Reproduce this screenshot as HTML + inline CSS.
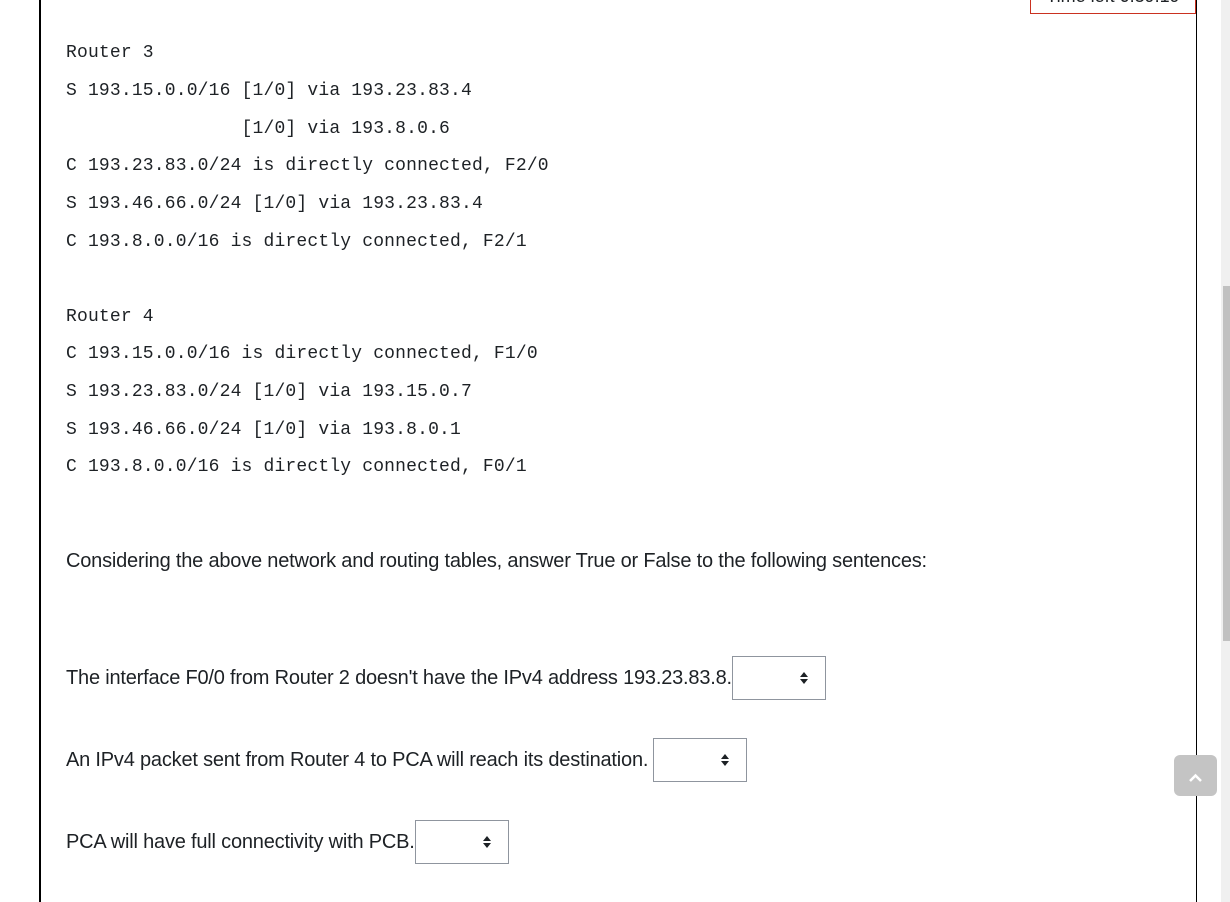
<!DOCTYPE html>
<html><head><style>
html,body{margin:0;padding:0;}
body{width:1230px;height:902px;position:relative;overflow:hidden;background:#fff;color:#1d2125;}
.l{position:absolute;left:39px;top:0;width:2px;height:902px;background:#000;}
.r{position:absolute;left:1196px;top:0;width:1px;height:902px;background:#000;}
.m{position:absolute;left:66px;font-family:"Liberation Mono",monospace;font-size:18px;letter-spacing:0.17px;white-space:pre;line-height:20px;}
.t{position:absolute;left:66px;font-family:"Liberation Sans",sans-serif;font-size:20px;line-height:22px;white-space:pre;letter-spacing:-0.2px;}
.s{position:absolute;width:92px;height:42px;border:1px solid #8f959e;background:#fff;}
.s svg{position:absolute;right:16px;top:14px;}
.timer{position:absolute;left:1030px;top:-29px;width:164px;height:41px;border:1px solid #ca3120;font-family:"Liberation Sans",sans-serif;font-size:18px;text-align:center;line-height:48px;}
.sb{position:absolute;left:1221px;top:0;width:9px;height:902px;background:#f0f0f0;}
.th{position:absolute;left:1223px;top:286px;width:7px;height:355px;background:#c1c1c1;}
.up{position:absolute;left:1174px;top:755px;width:43px;height:41px;border-radius:6px;background:#c4c4c4;}
</style></head><body>
<div class="l"></div><div class="r"></div>
<div class="timer">Time left 0:39:19</div>
<div class="sb"></div><div class="th"></div>
<div class="up"><svg width="43" height="41"><path d="M16 26 L21.5 20.5 L27 26" stroke="#fff" stroke-width="2.5" fill="none"/></svg></div>
<div class="m" style="top:43px">Router 3</div>
<div class="m" style="top:81px">S 193.15.0.0/16 [1/0] via 193.23.83.4</div>
<div class="m" style="top:119px">                [1/0] via 193.8.0.6</div>
<div class="m" style="top:156px">C 193.23.83.0/24 is directly connected, F2/0</div>
<div class="m" style="top:194px">S 193.46.66.0/24 [1/0] via 193.23.83.4</div>
<div class="m" style="top:232px">C 193.8.0.0/16 is directly connected, F2/1</div>
<div class="m" style="top:307px">Router 4</div>
<div class="m" style="top:344px">C 193.15.0.0/16 is directly connected, F1/0</div>
<div class="m" style="top:382px">S 193.23.83.0/24 [1/0] via 193.15.0.7</div>
<div class="m" style="top:420px">S 193.46.66.0/24 [1/0] via 193.8.0.1</div>
<div class="m" style="top:457px">C 193.8.0.0/16 is directly connected, F0/1</div>
<div class="t" style="top:550px">Considering the above network and routing tables, answer True or False to the following sentences:</div>
<div class="t" style="top:667px">The interface F0/0 from Router 2 doesn't have the IPv4 address 193.23.83.8.</div>
<div class="s" style="left:732px;top:656px"><svg width="10" height="14"><path d="M1 6 L5 1 L9 6Z M1 8 L5 13 L9 8Z" fill="#1d2125"/></svg></div>
<div class="t" style="top:749px">An IPv4 packet sent from Router 4 to PCA will reach its destination.</div>
<div class="s" style="left:653px;top:738px"><svg width="10" height="14"><path d="M1 6 L5 1 L9 6Z M1 8 L5 13 L9 8Z" fill="#1d2125"/></svg></div>
<div class="t" style="top:831px">PCA will have full connectivity with PCB.</div>
<div class="s" style="left:415px;top:820px"><svg width="10" height="14"><path d="M1 6 L5 1 L9 6Z M1 8 L5 13 L9 8Z" fill="#1d2125"/></svg></div>
</body></html>
